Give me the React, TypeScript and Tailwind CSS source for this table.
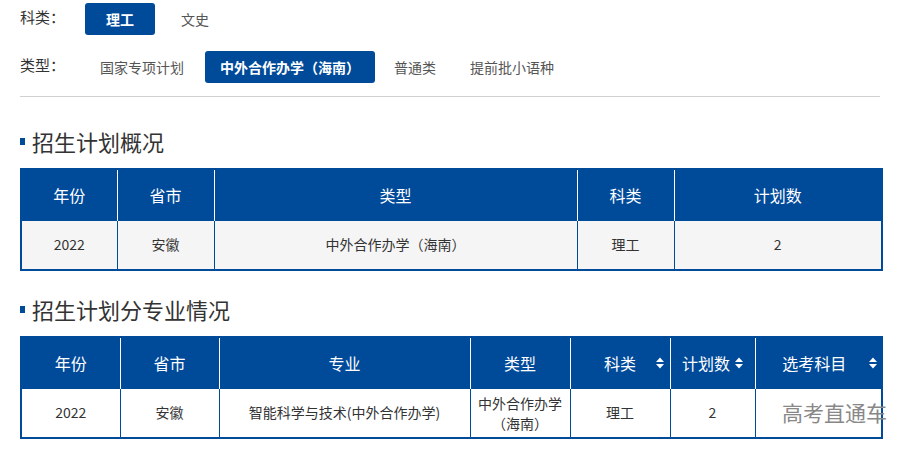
import React from "react";

const font = { fontFamily: '"Noto Sans CJK SC", "Noto Sans", sans-serif' };

function SortIcon() {
  return (
    <svg width="8" height="12" viewBox="0 0 8 12" className="inline-block">
      <path d="M4 0.5 L8 5 L0 5 Z" fill="white" />
      <path d="M0 7 L8 7 L4 11.5 Z" fill="white" />
    </svg>
  );
}

function Title({ text }: { text: string }) {
  return (
    <div className="flex items-center h-[30px] text-[22px] text-[#333] leading-none">
      <span className="w-[5px] h-[7px] bg-[#004a9a] mr-[7px]" />
      <span>{text}</span>
    </div>
  );
}

export default function App() {
  const th = "bg-[#004a9a] text-white text-[16px] font-normal border-x border-white h-[51px] p-0";
  const td = "border border-[#004a9a] text-[14px] text-[#333] h-[50px] p-0 text-center";
  return (
    <div className="w-[918px] h-[452px] bg-white relative overflow-hidden" style={font}>
      <div className="px-[20px] pt-[3px]">
        <div className="flex items-center h-[32px]">
          <span className="text-[15px] text-[#333] w-[65px] -mt-[4px]">科类：</span>
          <span className="w-[70px] h-[32px] rounded-[3px] bg-[#004a9a] text-white text-[14px] font-bold flex items-center justify-center">理工</span>
          <span className="ml-[26px] text-[14px] text-[#555]">文史</span>
        </div>
        <div className="flex items-center h-[32px] mt-[16px]">
          <span className="text-[15px] text-[#333] w-[80px] -mt-[4px]">类型：</span>
          <span className="text-[14px] text-[#555]">国家专项计划</span>
          <span className="ml-[21px] w-[170px] h-[32px] rounded-[3px] bg-[#004a9a] text-white text-[14px] font-bold flex items-center justify-center">中外合作办学（海南）</span>
          <span className="ml-[19px] text-[14px] text-[#555]">普通类</span>
          <span className="ml-[34px] text-[14px] text-[#555]">提前批小语种</span>
        </div>
        <div className="mt-[13px] w-[860px] h-px bg-[#d0d0d0]" />

        <div className="mt-[29px]">
          <Title text="招生计划概况" />
        </div>
        <table className="mt-[12px] w-[861px] table-fixed border-collapse border-2 border-[#004a9a]">
          <colgroup>
            <col className="w-[96px]" />
            <col className="w-[97px]" />
            <col className="w-[363px]" />
            <col className="w-[97px]" />
            <col className="w-[208px]" />
          </colgroup>
          <thead>
            <tr>
              <th className={th}>年份</th>
              <th className={th}>省市</th>
              <th className={th}>类型</th>
              <th className={th}>科类</th>
              <th className={th}>计划数</th>
            </tr>
          </thead>
          <tbody>
            <tr className="bg-[#f5f5f5]">
              <td className={td}>2022</td>
              <td className={td}>安徽</td>
              <td className={td}>中外合作办学（海南）</td>
              <td className={td}>理工</td>
              <td className={td}>2</td>
            </tr>
          </tbody>
        </table>

        <div className="mt-[23px]">
          <Title text="招生计划分专业情况" />
        </div>
        <table className="mt-[12px] w-[861px] table-fixed border-collapse border-2 border-[#004a9a]">
          <colgroup>
            <col className="w-[99px]" />
            <col className="w-[99px]" />
            <col className="w-[251px]" />
            <col className="w-[100px]" />
            <col className="w-[100px]" />
            <col className="w-[85px]" />
            <col className="w-[127px]" />
          </colgroup>
          <thead>
            <tr>
              <th className={th}>年份</th>
              <th className={th}>省市</th>
              <th className={th}>专业</th>
              <th className={th}>类型</th>
              <th className={th}>
                <div className="relative flex items-center justify-center">
                  <span>科类</span>
                  <span className="absolute right-[6px] top-1/2 -translate-y-1/2 flex"><SortIcon /></span>
                </div>
              </th>
              <th className={th}>
                <div className="flex items-center justify-center gap-[5px]">
                  <span>计划数</span>
                  <SortIcon />
                </div>
              </th>
              <th className={th}>
                <div className="relative flex items-center justify-center">
                  <span className="-ml-[8px]">选考科目</span>
                  <span className="absolute right-[4px] top-1/2 -translate-y-1/2 flex"><SortIcon /></span>
                </div>
              </th>
            </tr>
          </thead>
          <tbody>
            <tr className="bg-white">
              <td className={td}>2022</td>
              <td className={td}>安徽</td>
              <td className={td}>智能科学与技术(中外合作办学)</td>
              <td className={td + " leading-[20px]"}>中外合作办学<br />（海南）</td>
              <td className={td}>理工</td>
              <td className={td}>2</td>
              <td className={td}></td>
            </tr>
          </tbody>
        </table>
      </div>
      <div className="absolute left-[782px] top-[398px] text-[21px] leading-[28px] text-[#888]">高考直通车</div>
    </div>
  );
}
